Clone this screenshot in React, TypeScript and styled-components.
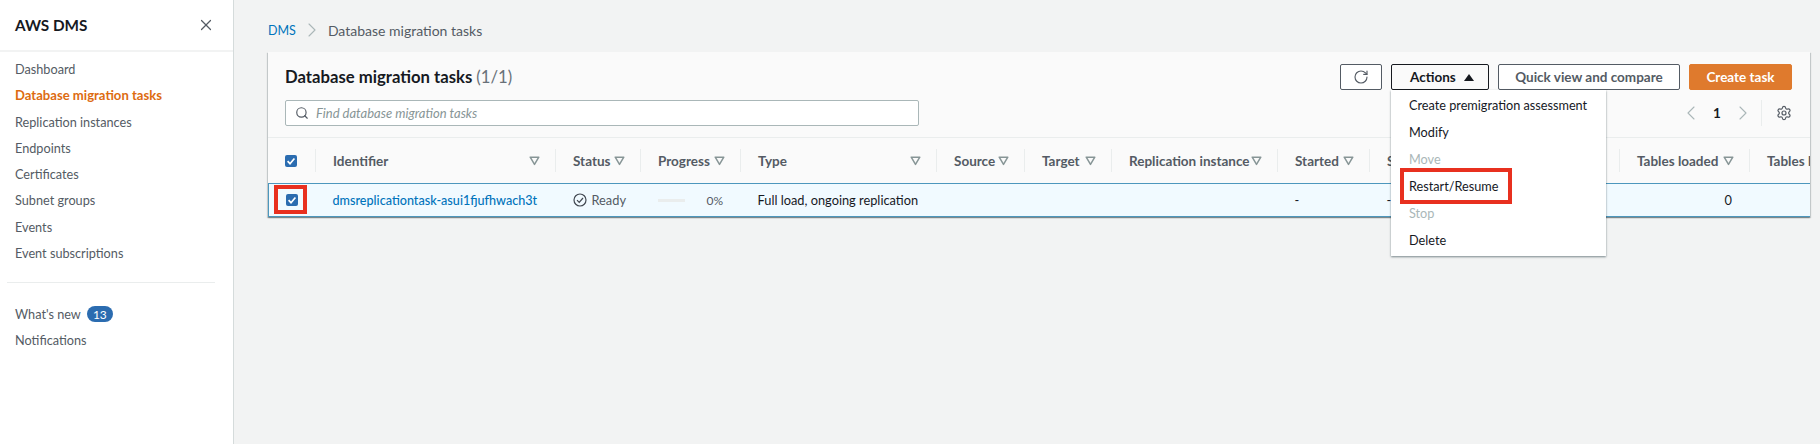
import React from 'react';
import styled, { createGlobalStyle } from 'styled-components';
import { ChevronLeft, ChevronRight, RotateCw, Search, Settings, X } from 'lucide-react';

const GlobalStyle = createGlobalStyle`
	html, body { margin: 0; padding: 0; background: #f2f3f3; }
	body { font-family: Lato, "Noto Sans", "Liberation Sans", sans-serif; color: #16191f; font-size: 13px; }
`;

const NAV_ITEMS = [
	'Dashboard',
	'Database migration tasks',
	'Replication instances',
	'Endpoints',
	'Certificates',
	'Subnet groups',
	'Events',
	'Event subscriptions',
];

const COLUMNS = [
	{ label: 'Identifier', width: 240 },
	{ label: 'Status', width: 85 },
	{ label: 'Progress', width: 100 },
	{ label: 'Type', width: 196 },
	{ label: 'Source', width: 88 },
	{ label: 'Target', width: 87 },
	{ label: 'Replication instance', width: 166 },
	{ label: 'Started', width: 92 },
	{ label: 'Stopped', width: 250 },
	{ label: 'Tables loaded', width: 130 },
	{ label: 'Tables loading', width: 130 },
];

const MENU_ITEMS = [
	{ label: 'Create premigration assessment' },
	{ label: 'Modify' },
	{ label: 'Move', disabled: true },
	{ label: 'Restart/Resume', marked: true },
	{ label: 'Stop', disabled: true },
	{ label: 'Delete' },
];

const GRID = `47px ${COLUMNS.map(c => `${c.width}px`).join(' ')}`;

const SortIcon = () => (
	<svg width="11" height="10" viewBox="0 0 11 10" fill="none">
		<path d="M1.2 1.2h8.6L5.5 8.4z" stroke="#879596" strokeWidth="1.5" strokeLinejoin="round" />
	</svg>
);

const CheckMark = () => (
	<svg width="12" height="12" viewBox="0 0 12 12" fill="none">
		<path d="M2.6 6.2l2.4 2.5 4.4-5.2" stroke="#fff" strokeWidth="1.7" />
	</svg>
);

const ReadyIcon = () => (
	<svg width="14" height="14" viewBox="0 0 14 14" fill="none">
		<circle cx="7" cy="7" r="6" stroke="#414750" strokeWidth="1.2" />
		<path d="M4 7.2l2.2 2.2L10 5" stroke="#414750" strokeWidth="1.2" />
	</svg>
);

export default function App() {
	return (
		<Page>
			<GlobalStyle />
			<Sidebar>
				<SideHeader>
					<SideTitle>AWS DMS</SideTitle>
					<X size={18} color="#545b64" strokeWidth={1.6} />
				</SideHeader>
				<NavList>
					{NAV_ITEMS.map(item => (
						<NavItem key={item} $active={item === 'Database migration tasks'}>
							{item}
						</NavItem>
					))}
				</NavList>
				<SideDivider />
				<NavList>
					<NavItem>
						What's new <Badge>13</Badge>
					</NavItem>
					<NavItem>Notifications</NavItem>
				</NavList>
			</Sidebar>
			<Main>
				<Breadcrumbs>
					<CrumbLink>DMS</CrumbLink>
					<ChevronRight size={24} color="#aab7b8" strokeWidth={1.1} />
					<span>Database migration tasks</span>
				</Breadcrumbs>
				<Card>
					<CardHeader>
						<HeaderTop>
							<Title>
								Database migration tasks <Count>(1/1)</Count>
							</Title>
							<Actions>
								<IconButton>
									<RotateCw size={16} color="#545b64" strokeWidth={1.7} />
								</IconButton>
								<MenuAnchor>
									<ActionsButton>
										Actions
										<Caret />
									</ActionsButton>
									<Menu>
										{MENU_ITEMS.map(item => (
											<MenuItem key={item.label} $disabled={item.disabled}>
												{item.label}
												{item.marked && <MenuMark />}
											</MenuItem>
										))}
									</Menu>
								</MenuAnchor>
								<WideButton>Quick view and compare</WideButton>
								<PrimaryButton>Create task</PrimaryButton>
							</Actions>
						</HeaderTop>
						<HeaderBottom>
							<SearchBox>
								<Search size={14} color="#545b64" strokeWidth={2} />
								<SearchHint>Find database migration tasks</SearchHint>
							</SearchBox>
							<Pager>
								<ChevronLeft size={24} color="#aab7b8" strokeWidth={1.1} />
								<PageNumber>1</PageNumber>
								<ChevronRight size={24} color="#aab7b8" strokeWidth={1.1} />
								<PagerDivider />
								<Settings size={16} color="#545b64" strokeWidth={1.8} />
							</Pager>
						</HeaderBottom>
					</CardHeader>
					<TableHead>
						<CheckCell>
							<Checkbox>
								<CheckMark />
							</Checkbox>
						</CheckCell>
						{COLUMNS.map(col => (
							<HeadCell key={col.label}>
								<HeadLabel>{col.label}</HeadLabel>
								<SortIcon />
							</HeadCell>
						))}
					</TableHead>
					<SelectedRow>
						<CheckCell>
							<Checkbox>
								<CheckMark />
							</Checkbox>
							<CheckMarkBox />
						</CheckCell>
						<BodyCell>
							<TaskLink>dmsreplicationtask-asui1fjufhwach3t</TaskLink>
						</BodyCell>
						<BodyCell>
							<ReadyIcon />
							<StatusText>Ready</StatusText>
						</BodyCell>
						<BodyCell>
							<ProgressTrack />
							<ProgressValue>0%</ProgressValue>
						</BodyCell>
						<BodyCell>Full load, ongoing replication</BodyCell>
						<BodyCell />
						<BodyCell />
						<BodyCell />
						<BodyCell>-</BodyCell>
						<BodyCell>-</BodyCell>
						<NumberCell>0</NumberCell>
						<BodyCell />
					</SelectedRow>
				</Card>
			</Main>
		</Page>
	);
}

const Page = styled.div`
	display: flex;
	width: 1820px;
	height: 444px;
	overflow: hidden;
	background: #f2f3f3;
`;

const Sidebar = styled.aside`
	flex: 0 0 233px;
	background: #fff;
	border-right: 1px solid #d5dbdb;
`;

const SideHeader = styled.div`
	height: 50px;
	padding: 0 18px 0 15px;
	display: flex;
	align-items: center;
	justify-content: space-between;
	border-bottom: 2px solid #f2f3f3;
`;

const SideTitle = styled.div`
	font-size: 15.3px;
	font-weight: 700;
	color: #16191f;
`;

const NavList = styled.div`
	display: flex;
	flex-direction: column;
	padding-top: 4px;
`;

const NavItem = styled.div<{ $active?: boolean }>`
	height: 26.25px;
	padding-left: 15px;
	display: flex;
	align-items: center;
	font-size: ${({ $active }) => ($active ? '13.1px' : '12.7px')};
	color: ${({ $active }) => ($active ? '#dd6b10' : '#545b64')};
	font-weight: ${({ $active }) => ($active ? 700 : 400)};
`;

const Badge = styled.span`
	margin-left: 6px;
	width: 26px;
	height: 16px;
	border-radius: 8px;
	background: #2b6cb0;
	color: #fff;
	font-size: 12px;
	display: inline-flex;
	align-items: center;
	justify-content: center;
`;

const SideDivider = styled.div`
	height: 1px;
	margin: 16px 18px 14px 7px;
	background: #eaeded;
`;

const Main = styled.main`
	flex: 1;
	min-width: 0;
	padding: 0 10px 0 34px;
`;

const Breadcrumbs = styled.div`
	height: 52px;
	padding-top: 8px;
	box-sizing: border-box;
	display: flex;
	align-items: center;
	gap: 4px;
	font-size: 14px;
	color: #545b64;
`;

const CrumbLink = styled.span`
	color: #0073bb;
	font-size: 12.5px;
`;

const Card = styled.section`
	position: relative;
	background: #fafafa;
	box-shadow: 0 1px 1px rgba(0, 28, 36, 0.3), 1px 1px 1px rgba(0, 28, 36, 0.15), -1px 1px 1px rgba(0, 28, 36, 0.15);
`;

const CardHeader = styled.div`
	height: 86px;
	box-sizing: border-box;
	padding: 12px 18px 0 17px;
	border-bottom: 1px solid #eaeded;
`;

const HeaderTop = styled.div`
	display: flex;
	align-items: center;
	justify-content: space-between;
`;

const Title = styled.h2`
	margin: 0;
	font-size: 16.7px;
	font-weight: 700;
	color: #16191f;
`;

const Count = styled.span`
	font-weight: 400;
	color: #687078;
`;

const Actions = styled.div`
	display: flex;
	gap: 9px;
`;

const Button = styled.button`
	height: 26px;
	padding: 0;
	box-sizing: border-box;
	display: inline-flex;
	align-items: center;
	justify-content: center;
	background: #fff;
	border: 1px solid #545b64;
	border-radius: 2px;
	font: 700 13.5px Lato, sans-serif;
	color: #545b64;
`;

const IconButton = styled(Button)`
	width: 42px;
`;

const WideButton = styled(Button)`
	width: 182px;
`;

const ActionsButton = styled(Button)`
	width: 98px;
	padding: 0 14px 0 18px;
	justify-content: space-between;
	border-color: #16191f;
	background: #fafafa;
	color: #16191f;
`;

const PrimaryButton = styled(Button)`
	width: 103px;
	background: #df7a2d;
	border-color: #df7a2d;
	color: #fff;
`;

const Caret = styled.span`
	width: 0;
	height: 0;
	border-left: 5.5px solid transparent;
	border-right: 5.5px solid transparent;
	border-bottom: 7px solid #16191f;
`;

const MenuAnchor = styled.div`
	position: relative;
`;

const Menu = styled.div`
	position: absolute;
	z-index: 2;
	top: 26px;
	left: 0;
	width: 215px;
	padding: 1px 0 3px;
	background: #fff;
	box-shadow: 0 1px 2px rgba(0, 28, 36, 0.5);
`;

const MenuItem = styled.div<{ $disabled?: boolean }>`
	position: relative;
	height: 27px;
	padding-left: 18px;
	display: flex;
	align-items: center;
	font-size: 12.7px;
	color: ${({ $disabled }) => ($disabled ? '#aab7b8' : '#16191f')};
`;

const MenuMark = styled.span`
	position: absolute;
	left: 9px;
	top: -4px;
	width: 112px;
	height: 36px;
	box-sizing: border-box;
	border: 4px solid #e8301f;
`;

const HeaderBottom = styled.div`
	margin-top: 9px;
	display: flex;
	align-items: center;
	justify-content: space-between;
`;

const SearchBox = styled.div`
	width: 634px;
	height: 26px;
	box-sizing: border-box;
	padding-left: 9px;
	display: flex;
	align-items: center;
	gap: 7px;
	background: #fff;
	border: 1px solid #aab7b8;
	border-radius: 2px;
`;

const SearchHint = styled.span`
	font-size: 13px;
	font-style: italic;
	color: #879596;
`;

const Pager = styled.div`
	display: flex;
	align-items: center;
	gap: 9px;
	padding-top: 1px;
`;

const PageNumber = styled.span`
	width: 10px;
	font-size: 13.5px;
	font-weight: 700;
	text-align: center;
	color: #16191f;
`;

const PagerDivider = styled.span`
	width: 1px;
	height: 26px;
	margin: 0 5px 0 -3px;
	background: #eaeded;
`;

const TableHead = styled.div`
	display: grid;
	grid-template-columns: ${GRID};
	height: 45px;
	overflow: hidden;
`;

const CheckCell = styled.div`
	position: relative;
	display: flex;
	align-items: center;
	justify-content: center;
	padding-right: 1px;
`;

const Checkbox = styled.span`
	width: 12px;
	height: 12px;
	border-radius: 2px;
	background: #2b6cb0;
	display: flex;
	align-items: center;
	justify-content: center;
`;

const CheckMarkBox = styled.span`
	position: absolute;
	left: 5px;
	top: 1px;
	width: 33px;
	height: 29px;
	box-sizing: border-box;
	border: 4px solid #e8301f;
`;

const HeadCell = styled.div`
	display: flex;
	align-items: center;
	justify-content: space-between;
	padding: 0 15px 0 18px;
	position: relative;
	color: #545b64;
	font-size: 13.5px;
	font-weight: 700;

	&::before {
		content: '';
		position: absolute;
		left: 0;
		top: 11px;
		bottom: 11px;
		width: 1px;
		background: #eaeded;
	}
`;

const HeadLabel = styled.span`
	white-space: nowrap;
`;

const SelectedRow = styled.div`
	display: grid;
	grid-template-columns: ${GRID};
	height: 34px;
	box-sizing: border-box;
	margin-left: 0;
	background: #f1faff;
	border: 1px solid #4d97bd;
	border-width: 1px 0 1px 1px;
	overflow: hidden;
`;

const BodyCell = styled.div`
	display: flex;
	align-items: center;
	padding-left: 16.5px;
	font-size: 12.8px;
	color: #16191f;
	white-space: nowrap;
	overflow: hidden;
`;

const NumberCell = styled(BodyCell)`
	justify-content: flex-end;
	padding-right: 18px;
`;

const TaskLink = styled.span`
	color: #0073bb;
	font-size: 12.6px;
	font-weight: 500;
`;

const StatusText = styled.span`
	margin-left: 5px;
	color: #545b64;
`;

const ProgressTrack = styled.span`
	width: 27px;
	height: 3px;
	background: #eaeded;
`;

const ProgressValue = styled.span`
	margin-left: 22px;
	font-size: 12px;
	color: #545b64;
`;
